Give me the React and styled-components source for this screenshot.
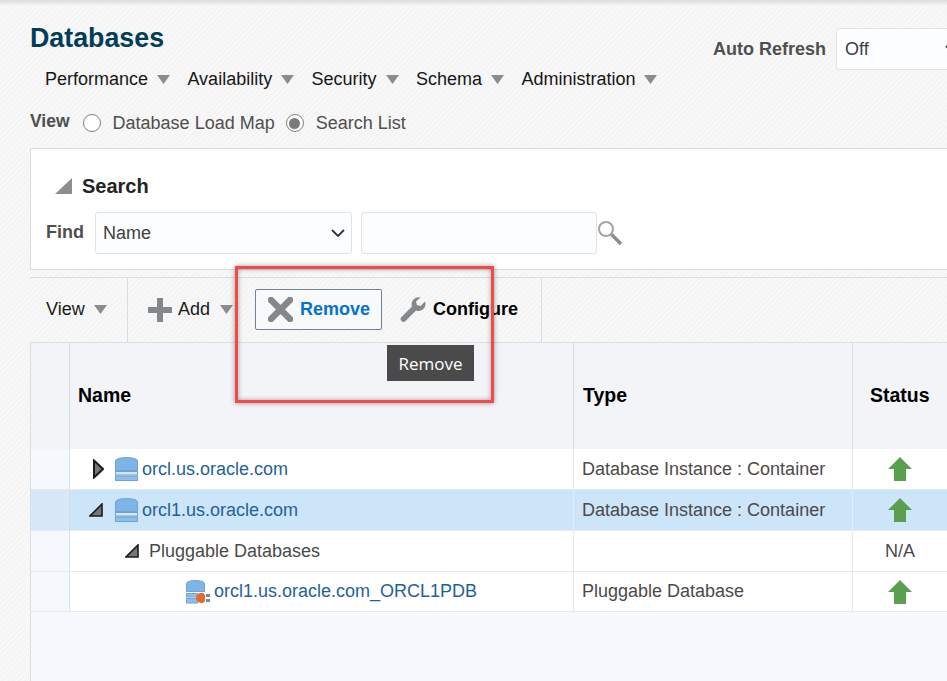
import React from 'react'
import styled, { createGlobalStyle } from 'styled-components'

const GlobalStyle = createGlobalStyle`
html, body {
  margin: 0;
  padding: 0;
  width: 100%;
  height: 100%;
  overflow: hidden;
}
body {
  font-family: "Liberation Sans", Arial, sans-serif;
}
`

const Page = styled.div`
position: relative;
width: 947px;
height: 681px;
overflow: hidden;
display: flex;
flex-direction: column;
background: repeating-linear-gradient(135deg, #f8f8f8 0 2px, #f4f4f4 2px 4px);
`

const TopShade = styled.div`
height: 6px;
flex: none;
background: linear-gradient(#dcdcdc, #f6f6f6);
`

const Content = styled.div`
flex: 1;
display: flex;
flex-direction: column;
padding-left: 30px;
min-height: 0;
`

const Header = styled.header`
display: flex;
height: 142px;
flex: none;
`

const HeaderLeft = styled.div`
width: 683px;
flex: none;
padding-top: 17px;
box-sizing: border-box;
`

const Title = styled.h1`
margin: 0;
height: 30px;
line-height: 30px;
font-size: 26.8px;
font-weight: 700;
color: #003d5b;
`

const Menu = styled.nav`
display: flex;
align-items: center;
height: 28px;
margin-top: 12px;
padding-left: 15px;
gap: 17.4px;
`

const MenuItem = styled.div`
display: flex;
align-items: center;
gap: 9px;
font-size: 18px;
color: #161616;
`

const ViewRow = styled.div`
display: flex;
align-items: center;
height: 24px;
margin-top: 18px;
font-size: 18px;
color: #4f4f4f;
`

const ViewLabel = styled.span`
font-weight: 700;
font-size: 17.5px;
margin-right: 13px;
position: relative;
top: -2px;
`

const Radio = styled.span`
width: 18px;
height: 18px;
box-sizing: border-box;
border: 1.5px solid #808080;
border-radius: 50%;
background: #fff;
flex: none;
margin-right: 12px;
display: flex;
align-items: center;
justify-content: center;
&::after {
  content: "";
  width: 11px;
  height: 11px;
  border-radius: 50%;
  background: ${p => (p.$checked ? '#7b7b7b' : 'transparent')};
}
`

const RadioText = styled.span`
margin-right: ${p => p.$gap || 0}px;
`

const AutoRefresh = styled.div`
display: flex;
align-items: center;
gap: 10px;
height: 42px;
margin-top: 22px;
flex: none;
`

const FieldLabel = styled.span`
font-weight: 700;
font-size: 18px;
color: #4f4f4f;
`

const SelectBox = styled.div`
width: ${p => p.$width}px;
height: 42px;
box-sizing: border-box;
flex: none;
display: flex;
align-items: center;
justify-content: space-between;
padding: 0 6px 0 ${p => p.$pad}px;
background: #fcfdfe;
border: 1px solid #dfe3e8;
border-radius: 3px;
font-size: 18px;
color: #3f3f3f;
`

const SearchPanel = styled.section`
height: 122px;
flex: none;
box-sizing: border-box;
background: #fff;
border: 1px solid #d6dfe6;
border-right: none;
`

const SearchHead = styled.div`
display: flex;
align-items: center;
gap: 10px;
height: 28px;
margin-top: 23px;
padding-left: 24px;
font-size: 20px;
font-weight: 700;
color: #242424;
`

const FindRow = styled.div`
display: flex;
align-items: center;
height: 42px;
margin-top: 12px;
padding-left: 15px;
`

const FindLabel = styled(FieldLabel)`
margin-right: 11px;
position: relative;
top: -1px;
`

const TextBox = styled.div`
width: 236px;
height: 42px;
box-sizing: border-box;
margin-left: 9px;
background: #fcfdfe;
border: 1px solid #dfe3e8;
border-radius: 3px;
`

const Toolbar = styled.div`
display: flex;
height: 65px;
flex: none;
margin-top: 7px;
box-sizing: border-box;
border-top: 1px solid #d6dfe6;
`

const ToolGroup = styled.div`
display: flex;
align-items: center;
box-sizing: border-box;
width: ${p => p.$width}px;
padding: 0 0 1px ${p => p.$pad}px;
border-right: 1px solid #d6dfe6;
`

const ToolText = styled.span`
font-size: 18px;
color: #1a1a1a;
margin-left: ${p => p.$gap || 0}px;
`

const ToolButton = styled.div`
display: flex;
align-items: center;
box-sizing: border-box;
width: 127px;
height: 41px;
padding-left: 12px;
gap: 7px;
border: 1px solid #6f8296;
border-radius: 2px;
background: #f7f9fb;
font-size: 18px;
font-weight: 700;
color: #0572ce;
`

const ToolPlain = styled.div`
display: flex;
align-items: center;
gap: 7px;
margin-left: 18px;
font-size: 18px;
font-weight: 700;
color: #000;
`

const Table = styled.div`
flex: 1;
display: flex;
flex-direction: column;
background: #f5f8fc;
border-top: 1px solid #d6dfe6;
border-left: 1px solid #d6dfe6;
min-height: 0;
`

const Row = styled.div`
display: grid;
grid-template-columns: 38px 504px 279px 1fr;
flex: none;
height: ${p => p.$height}px;
box-sizing: border-box;
background: ${p => (p.$selected ? '#cde5f9' : '#fff')};
border-bottom: 1px solid #e6eaee;
`

const HeadRow = styled(Row)`
background: #f2f4f8;
border-bottom: none;
`

const GutterCell = styled.div`
background: ${p => (p.$selected ? '#d9e8f6' : '#f5f8fc')};
`

const HeadGutter = styled.div`
background: #f2f4f8;
`

const Cell = styled.div`
display: flex;
align-items: center;
box-sizing: border-box;
min-width: 0;
border-left: 1px solid ${p => (p.$selected ? '#e3eef8' : '#e6eaee')};
padding-left: ${p => p.$pad || 0}px;
justify-content: ${p => (p.$center ? 'center' : 'flex-start')};
font-size: 18px;
color: #4a4a4a;
white-space: nowrap;
`

const FirstCell = styled(Cell)`
border-left: 1px solid #d6dfe6;
`

const HeadCell = styled.div`
box-sizing: border-box;
border-left: 1px solid #d6dfe6;
padding: 41px 0 0 ${p => p.$pad}px;
font-size: 19.5px;
font-weight: 700;
color: #000;
`

const DbLink = styled.a`
color: #1f6299;
margin-left: ${p => p.$gap || 0}px;
`

const TreeLabel = styled.span`
margin-left: 10px;
color: #4a4a4a;
`

const IconSlot = styled.span`
display: inline-flex;
flex: none;
margin-left: ${p => p.$gap || 0}px;
`

const Tooltip = styled.div`
position: absolute;
left: 387px;
top: 345px;
width: 87px;
height: 36px;
box-sizing: border-box;
display: flex;
align-items: center;
justify-content: center;
background: #4a4a4a;
color: #fff;
font-family: "Open Sans", sans-serif;
font-size: 17px;
`

const Highlight = styled.div`
position: absolute;
left: 235px;
top: 266px;
width: 259px;
height: 137px;
box-sizing: border-box;
border: 3px solid #f24a4a;
box-shadow: 0 0 5px rgba(0, 0, 0, 0.4), inset 0 0 5px rgba(0, 0, 0, 0.35);
`

const Caret = () => (
  <svg width="13" height="9" viewBox="0 0 13 9"><path d="M0 0h13L6.5 9z" fill="#8a8d90" /></svg>
)

const Chevron = () => (
  <svg width="14" height="8" viewBox="0 0 14 8"><path d="M1 1l6 6 6-6" fill="none" stroke="#333" strokeWidth="1.8" /></svg>
)

const PanelTwist = () => (
  <svg width="17" height="16" viewBox="0 0 17 16"><path d="M17 0v16H0z" fill="#8b8e91" /></svg>
)

const SearchIcon = () => (
  <svg width="26" height="26" viewBox="0 0 26 26">
    <circle cx="9" cy="9" r="7" fill="#fff" stroke="#a2a4a6" strokeWidth="2" />
    <path d="M14.5 14.5l9.5 9.5" stroke="#8a8c8e" strokeWidth="3.4" />
  </svg>
)

const PlusIcon = () => (
  <svg width="24" height="24" viewBox="0 0 24 24"><path d="M9 0h6v9h9v6h-9v9H9v-9H0V9h9z" fill="#85888b" /></svg>
)

const RemoveIcon = () => (
  <svg width="25" height="25" viewBox="0 0 25 25">
    <path d="M3 3l19 19M22 3L3 22" stroke="#85888b" strokeWidth="6.5" strokeLinecap="round" />
  </svg>
)

const WrenchIcon = () => (
  <svg width="26" height="26" viewBox="0 0 26 26">
    <path d="M25 4.5l-4.5 4.5-3.5-1-1-3.5L20.5.5A7 7 0 0 0 12 9.5L1.5 20a2.8 2.8 0 0 0 4 4L16 13.5A7 7 0 0 0 25 4.5z" fill="#85888b" />
  </svg>
)

const DbIcon = () => (
  <svg width="23" height="24" viewBox="0 0 23 24">
    <path d="M0.5 4c0-4.6 22-4.6 22 0v9.5H.5z" fill="#7fb4e6" stroke="#6fa3d3" />
    <rect x="0.5" y="14.5" width="22" height="3.5" fill="#d7e7f6" stroke="#6fa3d3" />
    <rect x="0.5" y="19" width="22" height="4.5" fill="#8fbfe9" stroke="#6fa3d3" />
  </svg>
)

const PdbIcon = () => (
  <svg width="24" height="24" viewBox="0 0 24 24">
    <path d="M.5 3.5c0-4 18-4 18 0v8H.5z" fill="#7fb4e6" stroke="#6fa3d3" />
    <rect x="0.5" y="13.5" width="11" height="3.5" fill="#8fbfe9" stroke="#6fa3d3" />
    <rect x="0.5" y="18.5" width="11" height="4.5" fill="#8fbfe9" stroke="#6fa3d3" />
    <path d="M15 13a5 5 0 0 0 0 10h2l2-2v-6l-2-2z" fill="#e8692c" />
    <rect x="20" y="14" width="4" height="3" fill="#7f8a94" />
    <rect x="20" y="19" width="4" height="3" fill="#7f8a94" />
  </svg>
)

const UpArrow = () => (
  <svg width="24" height="24" viewBox="0 0 24 24"><path d="M12 0l12 12h-6v12H6V12H0z" fill="#5a9e50" /></svg>
)

const TwistClosed = () => (
  <svg width="11" height="20" viewBox="0 0 11 20"><path d="M1 1.5L10 10l-9 8.5z" fill="#777" stroke="#1c1c1c" strokeWidth="2" /></svg>
)

const TwistOpen = () => (
  <svg width="14" height="14" viewBox="0 0 14 14"><path d="M13 1v12H1z" fill="#777" stroke="#1c1c1c" strokeWidth="1.6" /></svg>
)

const menuItems = ['Performance', 'Availability', 'Security', 'Schema', 'Administration']

const App = () => (
  <Page>
    <GlobalStyle />
    <TopShade />
    <Content>
      <Header>
        <HeaderLeft>
          <Title>Databases</Title>
          <Menu>
            {menuItems.map(item => (
              <MenuItem key={item}>{item} <Caret /></MenuItem>
            ))}
          </Menu>
          <ViewRow>
            <ViewLabel>View</ViewLabel>
            <Radio />
            <RadioText $gap={11}>Database Load Map</RadioText>
            <Radio $checked />
            <RadioText>Search List</RadioText>
          </ViewRow>
        </HeaderLeft>
        <AutoRefresh>
          <FieldLabel>Auto Refresh</FieldLabel>
          <SelectBox $width={130} $pad={8}>Off <Chevron /></SelectBox>
        </AutoRefresh>
      </Header>

      <SearchPanel>
        <SearchHead><PanelTwist /> Search</SearchHead>
        <FindRow>
          <FindLabel>Find</FindLabel>
          <SelectBox $width={257} $pad={7}>Name <Chevron /></SelectBox>
          <TextBox />
          <SearchIcon />
        </FindRow>
      </SearchPanel>

      <Toolbar>
        <ToolGroup $width={98} $pad={16}>
          <ToolText>View</ToolText>
          <IconSlot $gap={9}><Caret /></IconSlot>
        </ToolGroup>
        <ToolGroup $width={414} $pad={20}>
          <PlusIcon />
          <ToolText $gap={6}>Add</ToolText>
          <IconSlot $gap={10}><Caret /></IconSlot>
          <IconSlot $gap={22}>
            <ToolButton><RemoveIcon /> Remove</ToolButton>
          </IconSlot>
          <ToolPlain><WrenchIcon /> Configure</ToolPlain>
        </ToolGroup>
      </Toolbar>

      <Table>
        <HeadRow $height={106}>
          <HeadGutter />
          <HeadCell $pad={8}>Name</HeadCell>
          <HeadCell $pad={9}>Type</HeadCell>
          <HeadCell $pad={17}>Status</HeadCell>
        </HeadRow>
        <Row $height={41}>
          <GutterCell />
          <FirstCell $pad={23}>
            <TwistClosed />
            <IconSlot $gap={11}><DbIcon /></IconSlot>
            <DbLink $gap={4}>orcl.us.oracle.com</DbLink>
          </FirstCell>
          <Cell $pad={8}>Database Instance : Container</Cell>
          <Cell $center><UpArrow /></Cell>
        </Row>
        <Row $height={41} $selected>
          <GutterCell $selected />
          <FirstCell $pad={19} $selected>
            <TwistOpen />
            <IconSlot $gap={12}><DbIcon /></IconSlot>
            <DbLink $gap={4}>orcl1.us.oracle.com</DbLink>
          </FirstCell>
          <Cell $pad={8} $selected>Database Instance : Container</Cell>
          <Cell $center $selected><UpArrow /></Cell>
        </Row>
        <Row $height={41}>
          <GutterCell />
          <FirstCell $pad={55}>
            <TwistOpen />
            <TreeLabel>Pluggable Databases</TreeLabel>
          </FirstCell>
          <Cell />
          <Cell $center>N/A</Cell>
        </Row>
        <Row $height={40}>
          <GutterCell />
          <FirstCell $pad={116}>
            <PdbIcon />
            <DbLink $gap={4}>orcl1.us.oracle.com_ORCL1PDB</DbLink>
          </FirstCell>
          <Cell $pad={8}>Pluggable Database</Cell>
          <Cell $center><UpArrow /></Cell>
        </Row>
      </Table>
    </Content>
    <Tooltip>Remove</Tooltip>
    <Highlight />
  </Page>
)

export default App
